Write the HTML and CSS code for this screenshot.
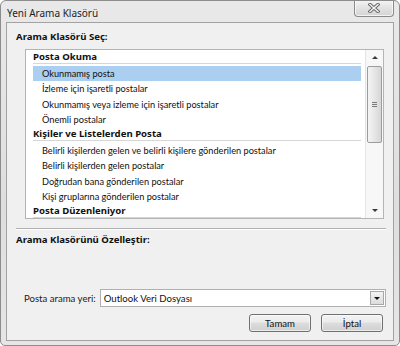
FILE: index.html
```html
<!DOCTYPE html>
<html lang="tr">
<head>
    <meta charset="UTF-8">
    <title>Yeni Arama Klasörü</title>
    <link rel="stylesheet" href="styles.css">
</head>
<body>
    <div class="window">
        <div class="titlebar">
            <span class="title">Yeni Arama Klasörü</span>
            <button class="close-btn" aria-label="Kapat">
                <svg width="12" height="10" viewBox="0 0 12 10">
                    <path d="M2 1.5 L10 8.5 M10 1.5 L2 8.5" stroke="#6a6a6a" stroke-width="3.4" stroke-linecap="square" fill="none"/>
                    <path d="M2 1.5 L10 8.5 M10 1.5 L2 8.5" stroke="#f4f4f4" stroke-width="1.4" stroke-linecap="square" fill="none"/>
                </svg>
            </button>
        </div>
        <div class="client">
            <div class="section-title">Arama Klasörü Seç:</div>
            <div class="listbox">
                <div class="list-items">
                    <div class="group-header">Posta Okuma</div>
                    <div class="item selected">Okunmamış posta</div>
                    <div class="item">İzleme için işaretli postalar</div>
                    <div class="item">Okunmamış veya izleme için işaretli postalar</div>
                    <div class="item">Önemli postalar</div>
                    <div class="group-header">Kişiler ve Listelerden Posta</div>
                    <div class="item">Belirli kişilerden gelen ve belirli kişilere gönderilen postalar</div>
                    <div class="item">Belirli kişilerden gelen postalar</div>
                    <div class="item">Doğrudan bana gönderilen postalar</div>
                    <div class="item">Kişi gruplarına gönderilen postalar</div>
                    <div class="group-header">Posta Düzenleniyor</div>
                </div>
                <div class="scrollbar">
                    <div class="sb-arrow up"></div>
                    <div class="sb-thumb"><span class="grip"></span></div>
                    <div class="sb-track"></div>
                    <div class="sb-arrow down"></div>
                </div>
            </div>
            <div class="divider"></div>
            <div class="section-title second">Arama Klasörünü Özelleştir:</div>
            <div class="field-row">
                <label for="location">Posta arama yeri:</label>
                <div class="combo" id="location">
                    <span class="combo-text">Outlook Veri Dosyası</span>
                    <span class="combo-btn"></span>
                </div>
            </div>
            <div class="button-row">
                <button class="btn">Tamam</button>
                <button class="btn">İptal</button>
            </div>
        </div>
    </div>
</body>
</html>
```

FILE: styles.css
```css
body {
    margin: 0;
    background: #ffffff;
    font-family: Lato, "Noto Sans", sans-serif;
    font-size: 9.6px;
    color: #111;
}
.window {
    width: 400px;
    height: 346px;
    box-sizing: border-box;
    display: flex;
    flex-direction: column;
    background: linear-gradient(#e9e9e9, #dedede 60%, #e6e6e6);
    border: 1px solid #8c8c8c;
    border-radius: 6px 6px 5px 5px;
    overflow: hidden;
}
.titlebar {
    height: 21px;
    display: flex;
    align-items: flex-start;
    flex-shrink: 0;
}
.title {
    padding: 6px 0 0 6px;
    font-family: "Noto Sans", sans-serif;
    font-size: 10px;
    line-height: 13px;
    color: #1e1e1e;
}
.close-btn {
    margin: -1px 5px 0 auto;
    width: 40px;
    height: 17px;
    padding: 0;
    display: flex;
    align-items: center;
    justify-content: center;
    border: 1px solid #8a8a8a;
    border-top: none;
    border-radius: 0 0 4px 4px;
    background: linear-gradient(#f6f6f6, #e2e2e2 50%, #d4d4d4);
    box-shadow: inset 0 0 0 1px rgba(255,255,255,0.7);
}
.client {
    flex: 1;
    margin: 0 5px 4px 5px;
    display: flex;
    flex-direction: column;
    background: #f0f0f0;
    border: 1px solid #a2a2a2;
    padding-top: 7px;
}
.section-title {
    margin-left: 9px;
    font-family: "Noto Sans", sans-serif;
    font-weight: bold;
    line-height: 14px;
    color: #111;
}
.section-title.second {
    margin-top: 3px;
}
.listbox {
    margin: 5px 9px 0 18px;
    height: 170px;
    box-sizing: border-box;
    display: flex;
    background: #fff;
    border: 1px solid #b4b4b4;
    overflow: hidden;
}
.list-items {
    flex: 1;
    overflow: hidden;
}
.group-header {
    height: 13px;
    line-height: 13px;
    margin: 0 4px 2px 7px;
    font-family: "Noto Sans", sans-serif;
    font-weight: bold;
    border-bottom: 1px solid #d6d6d6;
    white-space: nowrap;
}
.item {
    height: 15.3px;
    line-height: 15.3px;
    margin: 0 4px 0 7px;
    padding-left: 9px;
    font-size: 9.2px;
    white-space: nowrap;
}
.item.selected {
    background: #abcff1;
}
.scrollbar {
    width: 17px;
    display: flex;
    flex-direction: column;
    background: #f7f7f7;
    border-left: 1px solid #e4e4e4;
}
.sb-arrow {
    height: 16px;
    flex-shrink: 0;
    position: relative;
}
.sb-arrow::after {
    content: "";
    position: absolute;
    left: 6px;
    border-left: 3px solid transparent;
    border-right: 3px solid transparent;
}
.sb-arrow.up::after {
    top: 6px;
    border-bottom: 3px solid #3a3a3a;
}
.sb-arrow.down::after {
    top: 7px;
    border-top: 3px solid #3a3a3a;
}
.sb-thumb {
    height: 77px;
    margin: 0 1px 0 1px;
    box-sizing: border-box;
    border: 1px solid #9c9c9c;
    border-radius: 2px;
    background: linear-gradient(to right, #f4f4f4, #e6e6e6 50%, #d6d6d6);
    display: flex;
    align-items: center;
    justify-content: center;
}
.grip {
    width: 5px;
    height: 5px;
    background: repeating-linear-gradient(#7a7a7a 0 1px, transparent 1px 2px);
}
.sb-track {
    flex: 1;
}
.divider {
    margin: 9px 7px 0 9px;
    height: 1px;
    background: #b0b0b0;
    border-bottom: 1px solid #ffffff;
}
.field-row {
    margin: 42px 7px 0 17px;
    display: flex;
    align-items: center;
}
.field-row label {
    margin-right: 4px;
    white-space: nowrap;
    color: #1a1a1a;
}
.combo {
    flex: 1;
    height: 18px;
    box-sizing: border-box;
    display: flex;
    align-items: center;
    background: #fff;
    border: 1px solid #b0b0b0;
}
.combo-text {
    flex: 1;
    padding-left: 3px;
    color: #111;
}
.combo-btn {
    width: 14px;
    height: 14px;
    margin-right: 1px;
    box-sizing: border-box;
    border: 1px solid #a8a8a8;
    background: linear-gradient(#f4f4f4, #dcdcdc);
    position: relative;
}
.combo-btn::after {
    content: "";
    position: absolute;
    left: 3px;
    top: 5px;
    border-left: 3px solid transparent;
    border-right: 3px solid transparent;
    border-top: 3px solid #111;
}
.button-row {
    margin: 7px 10px 0 0;
    display: flex;
    justify-content: flex-end;
    gap: 10px;
}
.btn {
    width: 62px;
    height: 18px;
    padding: 0;
    font-family: inherit;
    font-size: 9.6px;
    font-weight: normal;
    color: #111;
    border: 1px solid #707070;
    border-radius: 3px;
    background: linear-gradient(#f3f3f3, #ebebeb 45%, #dddddd 50%, #cfcfcf);
    box-shadow: inset 0 0 0 1px rgba(255,255,255,0.6);
}
```
